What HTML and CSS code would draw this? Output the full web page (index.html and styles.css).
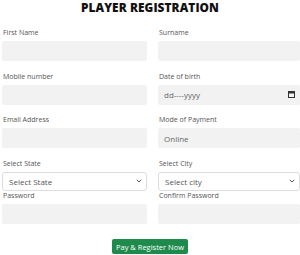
FILE: index.html
```html
<!DOCTYPE html>
<html lang="en">
<head>
    <meta charset="UTF-8">
    <meta name="viewport" content="width=device-width, initial-scale=1.0">
    <title>Player Registration</title>
    <link rel="stylesheet" href="styles.css">
</head>
<body>
    <h1 class="page-title">PLAYER REGISTRATION</h1>

    <form class="reg-form">
        <div class="form-grid">
            <div class="field">
                <label>First Name</label>
                <div class="input"></div>
            </div>
            <div class="field">
                <label>Surname</label>
                <div class="input"></div>
            </div>

            <div class="field">
                <label>Mobile number</label>
                <div class="input"></div>
            </div>
            <div class="field">
                <label>Date of birth</label>
                <div class="input input-date">
                    <span>dd----yyyy</span>
                    <svg class="cal-icon" width="7" height="7" viewBox="0 0 7 7">
                        <rect x="0.5" y="0.5" width="6" height="6" fill="none" stroke="#333" stroke-width="1"/>
                        <rect x="0.5" y="0.5" width="6" height="2" fill="#333"/>
                    </svg>
                </div>
            </div>

            <div class="field">
                <label>Email Address</label>
                <div class="input"></div>
            </div>
            <div class="field">
                <label>Mode of Payment</label>
                <div class="input input-text"><span>Online</span></div>
            </div>

            <div class="field field-select">
                <label>Select State</label>
                <div class="select">
                    <span>Select State</span>
                    <svg class="chevron" width="6" height="4" viewBox="0 0 6 4">
                        <path d="M0.7 0.8 L3 3 L5.3 0.8" fill="none" stroke="#555" stroke-width="1"/>
                    </svg>
                </div>
            </div>
            <div class="field field-select">
                <label>Select City</label>
                <div class="select">
                    <span>Select city</span>
                    <svg class="chevron" width="6" height="4" viewBox="0 0 6 4">
                        <path d="M0.7 0.8 L3 3 L5.3 0.8" fill="none" stroke="#555" stroke-width="1"/>
                    </svg>
                </div>
            </div>

            <div class="field">
                <label>Password</label>
                <div class="input"></div>
            </div>
            <div class="field">
                <label>Confirm Password</label>
                <div class="input"></div>
            </div>
        </div>

        <div class="actions">
            <button type="button" class="pay-button">Pay &amp; Register Now</button>
        </div>
    </form>
</body>
</html>
```

FILE: styles.css
```css
body {
    margin: 0;
    padding: 0;
    font-family: "Open Sans", Arial, sans-serif;
    background-color: #ffffff;
    color: #333333;
    overflow: hidden;
}

.page-title {
    margin: 0;
    text-align: center;
    font-size: 11.8px;
    line-height: 15px;
    font-weight: 800;
    color: #111111;
    letter-spacing: 0.1px;
}

.reg-form {
    padding-top: 13px;
}

.form-grid {
    display: grid;
    grid-template-columns: 145px 142px;
    column-gap: 11px;
    padding-left: 2px;
}

.field {
    display: flex;
    flex-direction: column;
    margin-bottom: 10.5px;
}

.field label {
    font-size: 7px;
    line-height: 10px;
    color: #555555;
    padding-left: 1px;
    margin-bottom: 3px;
}

.input {
    height: 20px;
    background-color: #f2f2f2;
    border-radius: 2px;
    display: flex;
    align-items: center;
    font-size: 8px;
    color: #666666;
}

.input-text span,
.input-date span {
    padding-left: 6px;
}

.input-date {
    justify-content: space-between;
}

.cal-icon {
    margin-right: 5px;
}

.field-select {
    margin-bottom: 0;
}

.select {
    height: 17px;
    border: 1px solid #dddddd;
    border-radius: 3px;
    display: flex;
    align-items: center;
    justify-content: space-between;
    font-size: 8px;
    color: #555555;
    padding: 0 4px 0 6px;
}

.actions {
    display: flex;
    justify-content: center;
    padding-top: 5px;
}

.pay-button {
    background-color: #1e8a4c;
    color: #ffffff;
    border: none;
    border-radius: 2px;
    font-family: "Open Sans", Arial, sans-serif;
    font-size: 7.5px;
    height: 15px;
    padding: 0 4px;
    cursor: pointer;
}
```
